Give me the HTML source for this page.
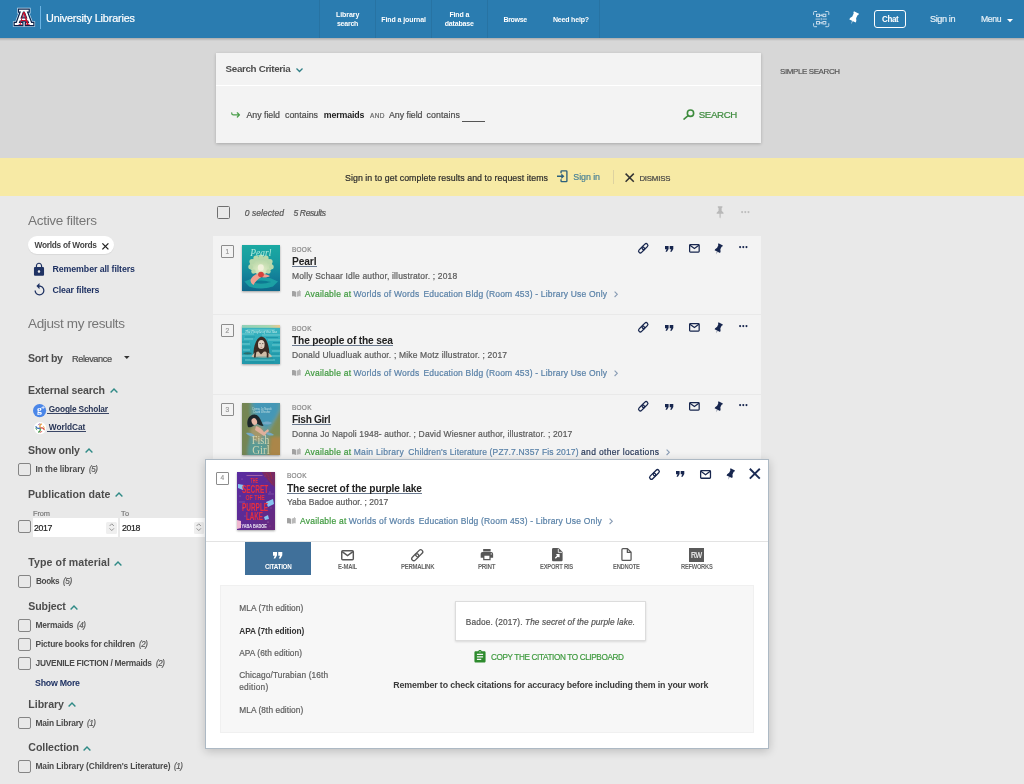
<!DOCTYPE html>
<html lang="en">
<head>
<meta charset="utf-8">
<title>Library search - University Libraries</title>
<style>
html,body{margin:0;padding:0}
body{width:1024px;height:784px;position:relative;overflow:hidden;background:#e9e9e9;font-family:"Liberation Sans",sans-serif}
#page{position:absolute;left:0;top:0;width:1024px;height:784px;will-change:transform}
.t{position:absolute;white-space:nowrap;display:block}
.ub{position:absolute;height:1px;display:block}
.b{position:absolute;box-sizing:border-box;display:block}
.cb{position:absolute;box-sizing:border-box;width:13px;height:12.5px;border:1px solid #858585;border-radius:2px;left:17.5px}
.nb{position:absolute;box-sizing:border-box;width:12.5px;height:12.5px;border:1px solid #8c8c8c;border-radius:1px}
.card{position:absolute;left:213px;width:548px;height:77.5px;background:#f3f3f3}
svg{position:absolute;overflow:visible;display:block}
.th{position:absolute;overflow:hidden;box-shadow:0 1px 2px rgba(0,0,0,.35)}
.pz{z-index:10}
</style>
</head>
<body>
<div id="page">
<!-- ===== header ===== -->
<div class="b" style="left:0;top:0;width:1024px;height:38px;background:#2a7cb0"></div>
<i class="b" style="left:319px;top:0;width:1px;height:38px;background:rgba(0,0,0,.07)"></i>
<i class="b" style="left:375px;top:0;width:1px;height:38px;background:rgba(0,0,0,.07)"></i>
<i class="b" style="left:431px;top:0;width:1px;height:38px;background:rgba(0,0,0,.07)"></i>
<i class="b" style="left:487px;top:0;width:1px;height:38px;background:rgba(0,0,0,.07)"></i>
<i class="b" style="left:599px;top:0;width:1px;height:38px;background:rgba(0,0,0,.07)"></i>
<!-- logo block A -->
<svg style="left:12px;top:7px" width="24" height="22" viewBox="0 0 24 22" fill="none">
  <path d="M8 3.600H15.700M3.700 17H9.300M14.900 17H20.300" stroke="#cfe3f3" stroke-width="5.6" stroke-linecap="square"/>
  <path d="M10.300 3.600L5.300 17M13.400 3.600L18.600 17M7.500 12.500H16.500" stroke="#cfe3f3" stroke-width="5.6" stroke-linecap="butt"/>
  <path d="M8 3.600H15.700M3.700 17H9.300M14.900 17H20.300" stroke="#0c234b" stroke-width="4.3" stroke-linecap="square"/>
  <path d="M10.300 3.600L5.300 17M13.400 3.600L18.600 17M7.500 12.500H16.500" stroke="#0c234b" stroke-width="4.3" stroke-linecap="butt"/>
  <path d="M8 3.600H15.700M3.700 17H9.300M14.900 17H20.300" stroke="#ffffff" stroke-width="1.9" stroke-linecap="square"/>
  <path d="M10.300 3.600L5.300 17M13.400 3.600L18.600 17M7.500 12.500H16.500" stroke="#ffffff" stroke-width="1.9" stroke-linecap="butt"/>
  <text x="12.100" y="17.600" text-anchor="middle" font-family="Liberation Serif, serif" font-size="19.500" fill="#c8102e" stroke="none" textLength="11.800" lengthAdjust="spacingAndGlyphs">A</text>
</svg>
<i class="b" style="left:40px;top:6px;width:1.200px;height:23px;background:#6bb3e2"></i>
<!-- QR icon -->
<svg style="left:813px;top:10.600px" width="16.400" height="16.200" viewBox="0 0 33 33" fill="none" stroke="#d3e3f0" stroke-width="1.900">
  <path d="M1 8V3a2 2 0 0 1 2-2h5M25 1h5a2 2 0 0 1 2 2v5M32 25v5a2 2 0 0 1-2 2h-5M8 32H3a2 2 0 0 1-2-2v-5"/>
  <rect x="7" y="6.500" width="6" height="5"/><rect x="20" y="6.500" width="6" height="5"/><rect x="7" y="21.500" width="6" height="5"/><rect x="20" y="21.500" width="6" height="5"/>
  <path d="M5 16.500h9M19 16.500h9M16.500 6v5M16.500 14v5M16.500 22v5M13 9h7M13 24h7" stroke-width="1.600"/>
</svg>
<!-- header pin -->
<svg style="left:851.400px;top:12.300px" width="7" height="13.100" viewBox="0 0 6 11.200"><g transform="rotate(25 3 4)"><path d="M.6 0H5.400V1.100L4.800 1.700V4.600L6 6.700V8H0V6.700L1.200 4.600V1.700L.6 1.100Z" fill="#ffffff"/><path d="M2.500 8H3.500L3 11.200Z" fill="#ffffff" fill-opacity=".7"/></g></svg>
<!-- chat button -->
<div class="b" style="left:874.4px;top:10.2px;width:31.4px;height:17.7px;border:1px solid #fff;border-radius:3px"></div>
<!-- menu caret -->
<svg style="left:1007px;top:19px" width="6" height="3.2" viewBox="0 0 6 3.2"><path d="M0 0h6L3 3.200z" fill="#fff"/></svg>

<!-- ===== top gray zone + search box ===== -->
<div class="b" style="left:0;top:38px;width:1024px;height:120px;background:#d7d7d7"></div>
<i class="b" style="left:0;top:38px;width:1024px;height:2.500px;background:linear-gradient(rgba(0,0,0,.2),rgba(0,0,0,0))"></i>
<div class="b" style="left:216px;top:53px;width:545px;height:90px;background:#f3f3f3;box-shadow:0 1px 3px rgba(0,0,0,.22)"></div>
<i class="b" style="left:216px;top:84.600px;width:545px;height:1.5px;background:#fff"></i>
<svg style="left:295.500px;top:67.500px" width="7" height="4.500" viewBox="0 0 7 4.500" fill="none" stroke="#2f7f86" stroke-width="1.300"><path d="M.5.500l3 3 3-3"/></svg>
<!-- hook arrow -->
<svg style="left:231px;top:112.200px" width="9.600" height="5.800" viewBox="0 0 19.200 11.600" fill="none" stroke="#4a9d4a" stroke-width="2.500" stroke-linecap="round" stroke-linejoin="round"><path d="M1.500 1.500v1a3.300 3.300 0 0 0 3.300 3.300h12M12.700 1.600l4.300 4.200-4.300 4.200"/></svg>
<i class="b" style="left:462px;top:120.500px;width:23px;height:1px;background:#555"></i>
<!-- search icon -->
<svg style="left:683px;top:109px" width="11.700" height="11" viewBox="0 0 23.400 22" fill="none" stroke="#3d8b3d" stroke-width="3.200" stroke-linecap="round"><circle cx="15" cy="8.400" r="6.300"/><path d="M10.300 13.100L2 20.200"/></svg>

<!-- ===== yellow banner ===== -->
<div class="b" style="left:0;top:158px;width:1024px;height:38px;background:#f7eaa5"></div>
<svg style="left:557.300px;top:169.800px" width="10.800" height="12.600" viewBox="0 0 24 28"><path d="M9 7.500V3.500a1.500 1.500 0 0 1 1.500-1.500h10a1.500 1.500 0 0 1 1.500 1.500v21a1.500 1.500 0 0 1-1.500 1.500h-10a1.500 1.500 0 0 1-1.500-1.500V20.500" fill="none" stroke="#2c607c" stroke-width="3"/><path d="M0 12.200h9.500V8l7 6-7 6v-4.200H0z" fill="#2c607c"/></svg>
<i class="b" style="left:613px;top:170px;width:1px;height:14px;background:#ddd2a0"></i>
<svg style="left:624.700px;top:172.500px" width="9.400" height="9.400" viewBox="0 0 9.400 9.400" stroke="#333" stroke-width="1.500"><path d="M.6.600l8.200 8.200M8.800.600L.6 8.800"/></svg>

<!-- ===== main column tint ===== -->
<!-- ===== sidebar ===== -->
<div class="b" style="left:28px;top:236.100px;width:86px;height:17.800px;background:#fff;border-radius:9px;box-shadow:0 1px 1px rgba(0,0,0,.07)"></div>
<svg style="left:102.300px;top:242.600px" width="6.800" height="6.800" viewBox="0 0 6.800 6.800" stroke="#222" stroke-width="1.300"><path d="M.4.400l6 6M6.400.400l-6 6"/></svg>
<!-- lock -->
<svg style="left:33px;top:261.500px" width="12" height="14.500" viewBox="3 0 18 23" fill="#1f3263"><path d="M18 8h-1V6c0-2.760-2.240-5-5-5S7 3.240 7 6v2H6c-1.100 0-2 .9-2 2v10c0 1.100.9 2 2 2h12c1.100 0 2-.9 2-2V10c0-1.100-.9-2-2-2zm-6 9c-1.100 0-2-.9-2-2s.9-2 2-2 2 .9 2 2-.9 2-2 2zm3.100-9H8.900V6c0-1.710 1.390-3.100 3.100-3.100 1.710 0 3.100 1.390 3.100 3.100v2z"/></svg>
<!-- replay -->
<svg style="left:33.500px;top:283.300px" width="11" height="12.400" viewBox="4 1 16 20" fill="#1f3263"><path d="M12 5V1L7 6l5 5V7c3.310 0 6 2.690 6 6s-2.690 6-6 6-6-2.690-6-6H4c0 4.420 3.580 8 8 8s8-3.580 8-8-3.580-8-8-8z"/></svg>
<!-- sort caret -->
<svg style="left:124px;top:355.800px" width="5.600" height="3" viewBox="0 0 5.600 3"><path d="M0 0h5.600L2.800 3z" fill="#333"/></svg>
<!-- heading chevrons (up) -->
<svg style="left:109.500px;top:387.500px" width="8" height="5" viewBox="0 0 8 5" fill="none" stroke="#2f8a86" stroke-width="1.400"><path d="M.6 4.400l3.400-3.400 3.400 3.400"/></svg>
<svg style="left:84.500px;top:448px" width="8" height="5" viewBox="0 0 8 5" fill="none" stroke="#2f8a86" stroke-width="1.400"><path d="M.6 4.400l3.400-3.400 3.400 3.400"/></svg>
<svg style="left:114.500px;top:491.700px" width="8" height="5" viewBox="0 0 8 5" fill="none" stroke="#2f8a86" stroke-width="1.400"><path d="M.6 4.400l3.400-3.400 3.400 3.400"/></svg>
<svg style="left:114.300px;top:561px" width="8" height="5" viewBox="0 0 8 5" fill="none" stroke="#2f8a86" stroke-width="1.400"><path d="M.6 4.400l3.400-3.400 3.400 3.400"/></svg>
<svg style="left:69.800px;top:605px" width="8" height="5" viewBox="0 0 8 5" fill="none" stroke="#2f8a86" stroke-width="1.400"><path d="M.6 4.400l3.400-3.400 3.400 3.400"/></svg>
<svg style="left:67.500px;top:702.300px" width="8" height="5" viewBox="0 0 8 5" fill="none" stroke="#2f8a86" stroke-width="1.400"><path d="M.6 4.400l3.400-3.400 3.400 3.400"/></svg>
<svg style="left:82.500px;top:745.800px" width="8" height="5" viewBox="0 0 8 5" fill="none" stroke="#2f8a86" stroke-width="1.400"><path d="M.6 4.400l3.400-3.400 3.400 3.400"/></svg>
<!-- google scholar icon -->
<svg style="left:33px;top:403.500px" width="13.200" height="13.200" viewBox="0 0 26 26"><circle cx="13" cy="13" r="13" fill="#4a86e8"/><text x="12.500" y="18.500" text-anchor="middle" font-family="Liberation Serif, serif" font-weight="700" font-size="19" fill="#ffffff">g</text><path d="M17 7h6M20 4v6" stroke="#dbe6fb" stroke-width="1.800"/></svg>
<!-- worldcat icon -->
<svg style="left:33.500px;top:421.800px" width="12.200" height="12.200" viewBox="0 0 24 24" fill="none" stroke-width="2.400" stroke-linecap="round"><circle cx="12" cy="12" r="12" fill="#ffffff"/>
 <path d="M12 11c-1-3 0-6 3-7" stroke="#e8a33a"/><path d="M13 12c3-1 6 0 7 3" stroke="#d8443a"/><path d="M12 13c1 3 0 6-3 7" stroke="#3a9a4a"/><path d="M11 12c-3 1-6 0-7-3" stroke="#3a6ab8"/>
 <path d="M8.500 5.500c1-1.200 2.200-1.700 3.500-1.700" stroke="#8a4a9a" stroke-width="1.800"/><path d="M18.500 8.500c1.200 1 1.700 2.200 1.700 3.500" stroke="#e8a33a" stroke-width="1.800"/><path d="M15.500 18.500c-1 1.200-2.200 1.700-3.500 1.700" stroke="#d8443a" stroke-width="1.800"/><path d="M5.500 15.500c-1.200-1-1.700-2.200-1.700-3.500" stroke="#3a9a4a" stroke-width="1.800"/></svg>
<!-- facet checkboxes -->
<i class="cb" style="top:463px"></i>
<i class="cb" style="top:520.100px"></i>
<i class="cb" style="top:575.200px"></i>
<i class="cb" style="top:619px"></i>
<i class="cb" style="top:638px"></i>
<i class="cb" style="top:657.200px"></i>
<i class="cb" style="top:716.800px"></i>
<i class="cb" style="top:760.300px"></i>
<!-- date inputs -->
<div class="b" style="left:32.500px;top:518px;width:85px;height:18.800px;background:#fff"></div>
<div class="b" style="left:120px;top:518px;width:85.500px;height:18.800px;background:#fff"></div>
<div class="b" style="left:106px;top:521.500px;width:10.500px;height:12px;background:#efefef;border-radius:1.500px"></div>
<div class="b" style="left:193.500px;top:521.500px;width:10.500px;height:12px;background:#efefef;border-radius:1.500px"></div>
<svg style="left:108.500px;top:523.300px" width="5.500" height="8.400" viewBox="0 0 5.500 8.400" fill="none" stroke="#8a8a8a" stroke-width=".9"><path d="M.6 3l2.150-2.200L4.900 3M.6 5.400l2.150 2.200L4.900 5.400"/></svg>
<svg style="left:196px;top:523.300px" width="5.500" height="8.400" viewBox="0 0 5.500 8.400" fill="none" stroke="#8a8a8a" stroke-width=".9"><path d="M.6 3l2.150-2.200L4.900 3M.6 5.400l2.150 2.200L4.900 5.400"/></svg>

<i class="b" style="left:217px;top:206px;width:13.2px;height:13px;border:1px solid #6f6f6f;border-radius:1.500px"></i>
<svg style="left:715.70px;top:206.00px" width="8.20" height="12.60" viewBox="5 1.5 14 22" ><path d="M8 2h8v2.200l-1.300 1v4.800l3.300 3.200V15.200h-5v5.800l-1 2.500-1-2.500v-5.800H6v-2L9.300 10V5.200L8 4.200z" fill="#b9b9b9"/></svg>
<svg style="left:740.50px;top:211.30px" width="8.60" height="2.20" viewBox="0 0 8.6 2.2" ><g fill="#bdbdbd"><circle cx="1.1" cy="1.1" r="1.05"/><circle cx="4.3" cy="1.1" r="1.05"/><circle cx="7.5" cy="1.1" r="1.05"/></g></svg>
<div class="card" style="top:236px;height:78.3px"></div>
<i class="nb" style="left:221px;top:245.4px"></i>
<svg style="left:637.60px;top:243.30px" width="10.50" height="10.50" viewBox="0 0 10.5 10.5" ><g fill="none" stroke="#17264e" stroke-width="1.25"><rect x="0.12" y="5.17" width="6.9" height="3.5" rx="1.75" transform="rotate(-45 3.57 6.92)"/><rect x="3.47" y="1.82" width="6.9" height="3.5" rx="1.75" transform="rotate(-45 6.92 3.57)"/></g></svg>
<svg style="left:664.50px;top:246.20px" width="8.30" height="5.70" viewBox="0 0 8.3 5.7" ><path d="M0 0H3.6V3L2 5.7H.5L1.6 3.3H0Z" fill="#17264e"/><path d="M0 0H3.6V3L2 5.7H.5L1.6 3.3H0Z" fill="#17264e" transform="translate(4.7 0)"/></svg>
<svg style="left:688.80px;top:244.25px" width="10.80" height="8.65" viewBox="0 0 10.8 8.65" ><g fill="none" stroke="#17264e" stroke-width="1.25"><rect x=".62" y=".62" width="9.56" height="7.4" rx=".8"/><path d="M.9 1.3l4.500 3.300 4.500-3.300"/></g></svg>
<svg style="left:716.40px;top:243.60px" width="6.00" height="11.20" viewBox="0 0 6 11.2" ><g transform="rotate(25 3 4)"><path d="M.6 0H5.400V1.100L4.800 1.700V4.600L6 6.700V8H0V6.700L1.200 4.600V1.700L.6 1.100Z" fill="#17264e"/><path d="M2.500 8H3.500L3 11.200Z" fill="#17264e" fill-opacity=".55"/></g></svg>
<svg style="left:739.40px;top:246.30px" width="8.60" height="2.20" viewBox="0 0 8.6 2.2" ><g fill="#17264e"><circle cx="1.1" cy="1.1" r="1.05"/><circle cx="4.3" cy="1.1" r="1.05"/><circle cx="7.5" cy="1.1" r="1.05"/></g></svg>
<svg style="left:292.00px;top:290.00px" width="8.70" height="7.00" viewBox="0 0 8.7 7" ><g fill="#a2a2a2"><path d="M0 1.200C1.300.8 2.700.9 4 1.700V7C2.700 6.300 1.300 6.200 0 6.500Z"/><path d="M4.700 1.700C5.400 1.200 6.200 1 7 1V0h.8v1h.9v5.500C7.400 6.200 6 6.300 4.700 7Z" fill-opacity=".75"/></g></svg>
<div class="card" style="top:315.4px;height:78.2px"></div>
<i class="nb" style="left:221px;top:324.4px"></i>
<svg style="left:637.60px;top:322.30px" width="10.50" height="10.50" viewBox="0 0 10.5 10.5" ><g fill="none" stroke="#17264e" stroke-width="1.25"><rect x="0.12" y="5.17" width="6.9" height="3.5" rx="1.75" transform="rotate(-45 3.57 6.92)"/><rect x="3.47" y="1.82" width="6.9" height="3.5" rx="1.75" transform="rotate(-45 6.92 3.57)"/></g></svg>
<svg style="left:664.50px;top:325.20px" width="8.30" height="5.70" viewBox="0 0 8.3 5.7" ><path d="M0 0H3.6V3L2 5.7H.5L1.6 3.3H0Z" fill="#17264e"/><path d="M0 0H3.6V3L2 5.7H.5L1.6 3.3H0Z" fill="#17264e" transform="translate(4.7 0)"/></svg>
<svg style="left:688.80px;top:323.25px" width="10.80" height="8.65" viewBox="0 0 10.8 8.65" ><g fill="none" stroke="#17264e" stroke-width="1.25"><rect x=".62" y=".62" width="9.56" height="7.4" rx=".8"/><path d="M.9 1.3l4.500 3.300 4.500-3.300"/></g></svg>
<svg style="left:716.40px;top:322.60px" width="6.00" height="11.20" viewBox="0 0 6 11.2" ><g transform="rotate(25 3 4)"><path d="M.6 0H5.400V1.100L4.800 1.700V4.600L6 6.700V8H0V6.700L1.200 4.600V1.700L.6 1.100Z" fill="#17264e"/><path d="M2.500 8H3.500L3 11.200Z" fill="#17264e" fill-opacity=".55"/></g></svg>
<svg style="left:739.40px;top:325.30px" width="8.60" height="2.20" viewBox="0 0 8.6 2.2" ><g fill="#17264e"><circle cx="1.1" cy="1.1" r="1.05"/><circle cx="4.3" cy="1.1" r="1.05"/><circle cx="7.5" cy="1.1" r="1.05"/></g></svg>
<svg style="left:292.00px;top:369.00px" width="8.70" height="7.00" viewBox="0 0 8.7 7" ><g fill="#a2a2a2"><path d="M0 1.200C1.300.8 2.700.9 4 1.700V7C2.700 6.300 1.300 6.200 0 6.500Z"/><path d="M4.700 1.700C5.400 1.200 6.200 1 7 1V0h.8v1h.9v5.500C7.400 6.200 6 6.300 4.700 7Z" fill-opacity=".75"/></g></svg>
<div class="card" style="top:394.7px;height:70px"></div>
<i class="nb" style="left:221px;top:403.4px"></i>
<svg style="left:637.60px;top:401.30px" width="10.50" height="10.50" viewBox="0 0 10.5 10.5" ><g fill="none" stroke="#17264e" stroke-width="1.25"><rect x="0.12" y="5.17" width="6.9" height="3.5" rx="1.75" transform="rotate(-45 3.57 6.92)"/><rect x="3.47" y="1.82" width="6.9" height="3.5" rx="1.75" transform="rotate(-45 6.92 3.57)"/></g></svg>
<svg style="left:664.50px;top:404.20px" width="8.30" height="5.70" viewBox="0 0 8.3 5.7" ><path d="M0 0H3.6V3L2 5.7H.5L1.6 3.3H0Z" fill="#17264e"/><path d="M0 0H3.6V3L2 5.7H.5L1.6 3.3H0Z" fill="#17264e" transform="translate(4.7 0)"/></svg>
<svg style="left:688.80px;top:402.25px" width="10.80" height="8.65" viewBox="0 0 10.8 8.65" ><g fill="none" stroke="#17264e" stroke-width="1.25"><rect x=".62" y=".62" width="9.56" height="7.4" rx=".8"/><path d="M.9 1.3l4.500 3.300 4.500-3.300"/></g></svg>
<svg style="left:716.40px;top:401.60px" width="6.00" height="11.20" viewBox="0 0 6 11.2" ><g transform="rotate(25 3 4)"><path d="M.6 0H5.400V1.100L4.800 1.700V4.600L6 6.700V8H0V6.700L1.200 4.600V1.700L.6 1.100Z" fill="#17264e"/><path d="M2.500 8H3.500L3 11.200Z" fill="#17264e" fill-opacity=".55"/></g></svg>
<svg style="left:739.40px;top:404.30px" width="8.60" height="2.20" viewBox="0 0 8.6 2.2" ><g fill="#17264e"><circle cx="1.1" cy="1.1" r="1.05"/><circle cx="4.3" cy="1.1" r="1.05"/><circle cx="7.5" cy="1.1" r="1.05"/></g></svg>
<svg style="left:292.00px;top:448.00px" width="8.70" height="7.00" viewBox="0 0 8.7 7" ><g fill="#a2a2a2"><path d="M0 1.200C1.300.8 2.700.9 4 1.700V7C2.700 6.300 1.300 6.200 0 6.500Z"/><path d="M4.700 1.700C5.400 1.200 6.200 1 7 1V0h.8v1h.9v5.500C7.400 6.200 6 6.300 4.700 7Z" fill-opacity=".75"/></g></svg>
<svg style="left:614.20px;top:291.30px" width="3.90" height="6.60" viewBox="0 0 3.9 6.6" ><path d="M.6.600l2.700 2.700-2.700 2.700" fill="none" stroke="#8a9db5" stroke-width="1.15"/></svg>
<svg style="left:614.20px;top:370.30px" width="3.90" height="6.60" viewBox="0 0 3.9 6.6" ><path d="M.6.600l2.700 2.700-2.700 2.700" fill="none" stroke="#8a9db5" stroke-width="1.15"/></svg>
<svg style="left:665.50px;top:449.30px" width="3.90" height="6.60" viewBox="0 0 3.9 6.6" ><path d="M.6.600l2.700 2.700-2.700 2.700" fill="none" stroke="#8a9db5" stroke-width="1.15"/></svg>
<div class="th" style="left:242px;top:245px;width:38px;height:45.500px;background:linear-gradient(#1ba9a2 0%,#179ba0 35%,#138099 68%,#0f6689 100%)">
<svg style="left:0;top:0" width="38" height="45.500" viewBox="0 0 38 45.500">
<defs><filter id="b1" x="-20%" y="-20%" width="140%" height="140%"><feGaussianBlur stdDeviation=".55"/></filter>
<radialGradient id="sh1" cx=".5" cy=".75" r=".8"><stop offset="0" stop-color="#e4eecb"/><stop offset=".5" stop-color="#c4ddb0"/><stop offset="1" stop-color="#a9cfa4"/></radialGradient></defs>
<g filter="url(#b1)">
<path d="M2.500 36.500L11 33H28L36 36.500L31 41.500Q19 45.500 7 41.500Z" fill="#1b9fa4"/><path d="M9 37Q19 34 29 37Q19 40.500 9 37Z" fill="#117a92"/>
<ellipse cx="19" cy="20.500" rx="11.300" ry="8.800" fill="url(#sh1)"/>
<g fill="#b9d8aa"><circle cx="8.600" cy="22" r="2.400"/><circle cx="29.400" cy="22" r="2.400"/><circle cx="10" cy="16.500" r="2.600"/><circle cx="28" cy="16.500" r="2.600"/><circle cx="14" cy="13" r="2.600"/><circle cx="24" cy="13" r="2.600"/><circle cx="19" cy="12" r="2.600"/><circle cx="11.500" cy="26.500" r="2.200"/><circle cx="26.500" cy="26.500" r="2.200"/></g>
<ellipse cx="18.800" cy="22.500" rx="3" ry="3.300" fill="#f1f1dc"/>
<path d="M15 29c-3 1-5.500 3-6.500 6 0 2 1 4 3 5 1.500-3 4-6 8-8 3 1 6 .5 8.500-1-3-1.500-8-2.500-13-2z" fill="#f0a090"/>
<ellipse cx="19" cy="29.500" rx="2.900" ry="2.700" fill="#d6423c"/>
</g>
<text x="18.800" y="11" text-anchor="middle" font-family="Liberation Serif, serif" font-style="italic" font-size="10.500" fill="#bdf0e0" fill-opacity=".92" textLength="21" lengthAdjust="spacingAndGlyphs">Pearl</text>
</svg></div>
<div class="th" style="left:242px;top:324.700px;width:38px;height:39.300px;background:#2faebb">
<svg style="left:0;top:0" width="38" height="39.300" viewBox="0 0 38 39.300">
<defs><linearGradient id="g2" x1="0" x2="1"><stop offset="0" stop-color="#8fd0b8"/><stop offset=".7" stop-color="#a8d6b0"/><stop offset="1" stop-color="#ecc88c"/></linearGradient>
<filter id="b2" x="-20%" y="-20%" width="140%" height="140%"><feGaussianBlur stdDeviation=".5"/></filter></defs>
<linearGradient id="w2" x1="0" y1="0" x2="0" y2="1"><stop offset="0" stop-color="#3cb6c2"/><stop offset=".55" stop-color="#2ba7b6"/><stop offset="1" stop-color="#2197aa"/></linearGradient><rect width="38" height="39.300" fill="url(#w2)"/><rect width="38" height="2.800" fill="url(#g2)"/>
<g filter="url(#b2)">
<g stroke="#7fd6d8" stroke-width="1" opacity=".8"><path d="M0 9h12M20 10h18M2 14h9M26 15h12M0 19h8M30 20h8M1 25h7M30 26h8M0 31h14M24 31h14M3 35h30M5 5h28"/></g>
<g stroke="#1b8fa2" stroke-width="1.100" opacity=".75"><path d="M3 12h10M24 12.500h12M0 22h9M29 23h9M0 28h10M27 29h10M8 37h24M0 17h7M31 17.500h7"/></g>
<path d="M1 28.500c3-1.500 6-1.500 9 0-3 1.500-6 1.500-9 0z" fill="#2c5a52" opacity=".7"/>
<path d="M11.500 32.500c-.5-8 1.500-19 7.500-21 6 0 8.500 10 8.500 21z" fill="#3a2a22"/>
<ellipse cx="19.300" cy="19.500" rx="3.300" ry="4.600" fill="#e2d2c2"/><path d="M17.400 18.600h1.400M20 18.600h1.400" stroke="#4a3a32" stroke-width=".7"/><path d="M18.500 22.300h1.700" stroke="#a86a5a" stroke-width=".7"/><path d="M19.300 19.500v1.600" stroke="#b8a090" stroke-width=".5"/>
<path d="M9.500 31.500c2-4 5-5 7-5l2.500 3 3-3c3 0 6.500 2 8 5-2 2-18.500 2-20.500 0z" fill="#cfbca6"/><path d="M8 32.500c4-1.200 19-1.200 23 0v2H8z" fill="#2a8f98" opacity=".55"/>
<path d="M14.500 24c-1 3-2 6-1.500 8.500M24.500 24c1 3 1.500 6 1 8.500" stroke="#3a2a22" stroke-width="1.700" fill="none"/>
</g>
<text x="19" y="8" text-anchor="middle" font-family="Liberation Serif, serif" font-style="italic" font-size="3.700" fill="#dff5f1" fill-opacity=".9">The People of the Sea</text>
</svg></div>
<div class="th" style="left:242px;top:403px;width:38px;height:52px;background:#6f9a86">
<svg style="left:0;top:0" width="38" height="52" viewBox="0 0 38 52">
<defs><linearGradient id="g3" x1="0" y1="0" x2="1" y2="1"><stop offset="0" stop-color="#6f9678"/><stop offset=".45" stop-color="#4f9bac"/><stop offset="1" stop-color="#a8945c"/></linearGradient>
<filter id="b3" x="-20%" y="-20%" width="140%" height="140%"><feGaussianBlur stdDeviation="1.500"/></filter>
<filter id="b3s" x="-20%" y="-20%" width="140%" height="140%"><feGaussianBlur stdDeviation=".5"/></filter>
<clipPath id="c3"><rect width="38" height="52"/></clipPath></defs>
<g clip-path="url(#c3)">
<rect width="38" height="52" fill="url(#g3)"/>
<g filter="url(#b3)">
<path d="M10-2h26v8c-2 8-6 14-12 18-4-4-10-10-14-26z" fill="#4597b6"/>
<path d="M-2-2h10c-1 10 1 18 3 26-3 8-5 16-4 30H-2z" fill="#748552"/>
<path d="M27 30c4-8 8-16 13-24v48H24c2-8 3-14 3-24z" fill="#7f8c56"/>
<path d="M29 34h11v20H27z" fill="#ab8648"/>
<path d="M8 38c4-3 10-3 16 0 2 4 2 10 0 16H6c-1-6 0-12 2-16z" fill="#5a9a94"/>
<path d="M8 28c2-6 8-8 12-4 2 4 1 10-2 14-4 2-8-2-10-10z" fill="#a4976a"/>
</g>
<g filter="url(#b3s)">
<path d="M6 16c2-5 8-6 11-2 2 3 3 6 4.500 9-3 0-5.500-2-7.500-3-2 3-5 5-8 4-1-3-1-5 0-8z" fill="#1d282c"/>
<ellipse cx="12.300" cy="18.500" rx="2.700" ry="3.500" fill="#e8b8a6" transform="rotate(-20 12.300 18.500)"/>
<path d="M14 23c3 1 6 3 8 6l4-3 1 2-5 5c-3-2-6-4-9-6z" fill="#e0b09c"/>
<path d="M20 20c3-2 7-2 10 0-3 2-7 2-10 0zM4 30c3-1 7 0 9 3-3 1-7 0-9-3zM24 30c3-1 6 0 8 2-3 1-6 1-8-2z" fill="#74a9c6"/>
</g>
<text x="18.500" y="41.300" text-anchor="middle" font-family="Liberation Serif, serif" font-size="11.500" fill="#e0dfb8" fill-opacity=".85" textLength="17.500" lengthAdjust="spacingAndGlyphs">Fish</text>
<text x="19" y="51" text-anchor="middle" font-family="Liberation Serif, serif" font-size="11.500" fill="#e0dfb8" fill-opacity=".85" textLength="17.500" lengthAdjust="spacingAndGlyphs">Girl</text>
<text x="20" y="6.500" text-anchor="middle" font-family="Liberation Sans, sans-serif" font-size="2.600" fill="#d8ecec" fill-opacity=".8">Donna Jo Napoli</text>
<text x="20" y="10" text-anchor="middle" font-family="Liberation Sans, sans-serif" font-size="2.600" fill="#d8ecec" fill-opacity=".8">David Wiesner</text>
</g>
</svg></div>
<div class="b pz" style="left:205px;top:459px;width:564px;height:289.500px;background:#fff;border:1px solid #adb9c4;box-shadow:0 2px 9px rgba(0,0,0,.2)"></div>
<i class="nb pz" style="left:216.200px;top:472.200px"></i>
<i class="b pz" style="left:206px;top:541px;width:562px;height:1px;background:#e3e3e3"></i>
<svg class="pz" style="left:648.80px;top:468.80px" width="10.92" height="10.92" viewBox="0 0 10.5 10.5" ><g fill="none" stroke="#17264e" stroke-width="1.25"><rect x="0.12" y="5.17" width="6.9" height="3.5" rx="1.75" transform="rotate(-45 3.57 6.92)"/><rect x="3.47" y="1.82" width="6.9" height="3.5" rx="1.75" transform="rotate(-45 6.92 3.57)"/></g></svg>
<svg class="pz" style="left:675.80px;top:471.30px" width="8.30" height="5.70" viewBox="0 0 8.3 5.7" ><path d="M0 0H3.6V3L2 5.7H.5L1.6 3.3H0Z" fill="#17264e"/><path d="M0 0H3.6V3L2 5.7H.5L1.6 3.3H0Z" fill="#17264e" transform="translate(4.7 0)"/></svg>
<svg class="pz" style="left:700.00px;top:469.90px" width="11.12" height="8.91" viewBox="0 0 10.8 8.65" ><g fill="none" stroke="#17264e" stroke-width="1.25"><rect x=".62" y=".62" width="9.56" height="7.4" rx=".8"/><path d="M.9 1.3l4.500 3.300 4.500-3.300"/></g></svg>
<svg class="pz" style="left:727.80px;top:468.90px" width="6.12" height="11.42" viewBox="0 0 6 11.2" ><g transform="rotate(25 3 4)"><path d="M.6 0H5.400V1.100L4.800 1.700V4.600L6 6.700V8H0V6.700L1.200 4.600V1.700L.6 1.100Z" fill="#17264e"/><path d="M2.500 8H3.500L3 11.200Z" fill="#17264e" fill-opacity=".55"/></g></svg>
<svg class="pz" style="left:749.20px;top:468.00px" width="11.60" height="11.40" viewBox="0 0 11.6 11.4" ><path d="M.8.800l10 9.800M10.800.800L.8 10.600" stroke="#1c2c55" stroke-width="1.900" fill="none"/></svg>
<svg class="pz" style="left:287.00px;top:516.80px" width="8.70" height="7.00" viewBox="0 0 8.7 7" ><g fill="#a2a2a2"><path d="M0 1.200C1.300.8 2.700.9 4 1.700V7C2.700 6.300 1.300 6.200 0 6.500Z"/><path d="M4.700 1.700C5.400 1.200 6.200 1 7 1V0h.8v1h.9v5.500C7.400 6.200 6 6.300 4.700 7Z" fill-opacity=".75"/></g></svg>
<svg class="pz" style="left:609.00px;top:518.00px" width="3.90" height="6.60" viewBox="0 0 3.9 6.6" ><path d="M.6.600l2.700 2.700-2.700 2.700" fill="none" stroke="#8a9db5" stroke-width="1.15"/></svg>
<div class="b pz" style="left:244.500px;top:542px;width:66.500px;height:33.300px;background:#40709a"></div>
<svg class="pz" style="left:272.50px;top:552.20px" width="9.30" height="6.38" viewBox="0 0 8.3 5.7" ><path d="M0 0H3.6V3L2 5.7H.5L1.6 3.3H0Z" fill="#ffffff"/><path d="M0 0H3.6V3L2 5.7H.5L1.6 3.3H0Z" fill="#ffffff" transform="translate(4.7 0)"/></svg>
<svg class="pz" style="left:340.70px;top:549.90px" width="13.07" height="10.47" viewBox="0 0 10.8 8.65" ><g fill="none" stroke="#575757" stroke-width="1.2"><rect x=".62" y=".62" width="9.56" height="7.4" rx=".8"/><path d="M.9 1.3l4.500 3.300 4.500-3.300"/></g></svg>
<svg class="pz" style="left:410.70px;top:549.00px" width="12.49" height="12.49" viewBox="0 0 10.5 10.5" ><g fill="none" stroke="#575757" stroke-width="1.1"><rect x="0.12" y="5.17" width="6.9" height="3.5" rx="1.75" transform="rotate(-45 3.57 6.92)"/><rect x="3.47" y="1.82" width="6.9" height="3.5" rx="1.75" transform="rotate(-45 6.92 3.57)"/></g></svg>
<svg class="pz" style="left:479.70px;top:549.00px" width="13.80" height="11.20" viewBox="2 3 20 18" ><path d="M19 8H5c-1.660 0-3 1.340-3 3v6h4v4h12v-4h4v-6c0-1.660-1.340-3-3-3zm-3 11H8v-5h8v5zm3-7c-.55 0-1-.45-1-1s.45-1 1-1 1 .45 1 1-.45 1-1 1zm-1-9H6v4h12V3z" fill="#575757"/></svg>
<svg class="pz" style="left:551.70px;top:548.20px" width="10.60" height="13.30" viewBox="4 2 16 20" ><path d="M14 2H6c-1.100 0-2 .9-2 2v16c0 1.100.9 2 2 2h12c1.100 0 2-.9 2-2V8z" fill="#575757"/><path d="M13.500 3v5.500H19" fill="none" stroke="#fff" stroke-width="1.300"/><path d="M9 17.500l5-5M10.500 12h4v4" fill="none" stroke="#fff" stroke-width="2"/></svg>
<svg class="pz" style="left:620.70px;top:548.20px" width="11.00" height="13.10" viewBox="4 2 16 20" ><path d="M13.500 3H6.500c-.8 0-1.500.7-1.500 1.500v15c0 .8.7 1.500 1.500 1.500h11c.8 0 1.500-.7 1.500-1.500V8.500zM13.300 3v5.700H19" fill="none" stroke="#575757" stroke-width="1.900" stroke-linejoin="round"/></svg>
<div class="b pz" style="left:689.200px;top:547.500px;width:15px;height:14.300px;background:#5a5a5a"></div>
<div class="b pz" style="left:220px;top:585px;width:534px;height:148px;background:#f7f7f7;border:1px solid #f0f0f0"></div>
<div class="b pz" style="left:455px;top:601.200px;width:191.300px;height:40px;background:#fff;border:1px solid #dcdcdc;box-shadow:0 1px 2px rgba(0,0,0,.12)"></div>
<svg class="pz" style="left:473.70px;top:650.20px" width="12.00" height="12.40" viewBox="3 1 18 20" ><path d="M19 3h-4.180C14.400 1.840 13.300 1 12 1c-1.300 0-2.400.84-2.820 2H5c-1.100 0-2 .9-2 2v14c0 1.100.9 2 2 2h14c1.100 0 2-.9 2-2V5c0-1.100-.9-2-2-2zm-7 0c.55 0 1 .45 1 1s-.45 1-1 1-1-.45-1-1 .45-1 1-1zm2 14H7v-2h7v2zm3-4H7v-2h10v2zm0-4H7V7h10v2z" fill="#2e8b2e"/></svg>
<div class="th pz" style="left:236.800px;top:472px;width:38px;height:58.200px;background:#5b2a98">
<svg style="left:0;top:0" width="38" height="58.200" viewBox="0 0 38 58.200">
<defs><linearGradient id="g4" x1="0" y1="0" x2="1" y2="1"><stop offset="0" stop-color="#5a2ca0"/><stop offset=".6" stop-color="#5e2a92"/><stop offset="1" stop-color="#6a2a7a"/></linearGradient></defs>
<rect width="38" height="58.200" fill="url(#g4)"/>
<path d="M25 0h13v15c-3-2-6-5-8-8-2-2-4-4-5-7z" fill="#7d2a5c" opacity=".85"/><path d="M29 1l3 4M33 0l2 7M31 6l4 5" stroke="#a8303a" stroke-width=".8" opacity=".8"/>
<path d="M1 12l6 1-1 5-5-2zM29 30l7-3 1 5-6 3zM27 45l4-2 1 4-4 1z" fill="#86c4ee"/>
<path d="M0 48l4 1v7l-4 1z" fill="#f0b8d0"/>
<g font-family="Liberation Sans, sans-serif" font-weight="700" fill="#ea2f3c">
<text x="13.400" y="11" font-size="6.300" textLength="7.600" lengthAdjust="spacingAndGlyphs">THE</text>
<text x="4.900" y="20.800" font-size="10.600" textLength="26.300" lengthAdjust="spacingAndGlyphs">SECRET</text>
<text x="8.500" y="28.400" font-size="7.500" textLength="19.200" lengthAdjust="spacingAndGlyphs">OF THE</text>
<text x="4.900" y="38.600" font-size="11" textLength="26.300" lengthAdjust="spacingAndGlyphs">PURPLE</text>
<text x="8.900" y="48.500" font-size="10.600" textLength="17" lengthAdjust="spacingAndGlyphs">LAKE</text>
</g>
<text x="4.500" y="55.600" font-family="Liberation Sans, sans-serif" font-weight="700" font-size="5.600" fill="#f4f0fa" textLength="25.400" lengthAdjust="spacingAndGlyphs">YABA BADOE</text>
<rect x="9.500" y="3.300" width="16" height=".45" fill="#f0a8b8"/><g opacity=".55"><circle cx="5" cy="7" r=".5" fill="#f0c0e0"/><circle cx="30" cy="9" r=".6" fill="#c04060"/><circle cx="33" cy="20" r=".5" fill="#f0c0e0"/><circle cx="3" cy="24" r=".6" fill="#a0d0f0"/><circle cx="34" cy="36" r=".5" fill="#f0c0e0"/><circle cx="6" cy="36" r=".5" fill="#f0c0e0"/><circle cx="31" cy="50" r=".6" fill="#f0c0e0"/><circle cx="8" cy="44" r=".5" fill="#a0d0f0"/><circle cx="33" cy="54" r=".5" fill="#e08090"/><circle cx="28" cy="4" r=".7" fill="#c04050"/><circle cx="35" cy="12" r=".6" fill="#b03a4a"/><path d="M31 22h6M2 30h6" stroke="#e8e0f4" stroke-width=".35"/></g>
</svg></div>

<span class='t' style='left:46.00px;top:13.30px;font-size:10.8px;line-height:10.8px;color:#ffffff;-webkit-text-stroke:.2px;letter-spacing:-0.148px;'>University Libraries</span>
<span class='t' style='left:336.00px;top:11.30px;font-size:7px;line-height:7px;color:#ffffff;font-weight:700;letter-spacing:-0.056px;'>Library</span>
<span class='t' style='left:336.90px;top:20.30px;font-size:7px;line-height:7px;color:#ffffff;font-weight:700;letter-spacing:-0.216px;'>search</span>
<span class='t' style='left:381.25px;top:16.30px;font-size:7px;line-height:7px;color:#ffffff;font-weight:700;letter-spacing:-0.088px;'>Find a journal</span>
<span class='t' style='left:449.40px;top:11.30px;font-size:7px;line-height:7px;color:#ffffff;font-weight:700;letter-spacing:-0.125px;'>Find a</span>
<span class='t' style='left:444.70px;top:20.30px;font-size:7px;line-height:7px;color:#ffffff;font-weight:700;letter-spacing:-0.151px;'>database</span>
<span class='t' style='left:503.40px;top:16.30px;font-size:7px;line-height:7px;color:#ffffff;font-weight:700;letter-spacing:-0.299px;'>Browse</span>
<span class='t' style='left:553.00px;top:16.30px;font-size:7px;line-height:7px;color:#ffffff;font-weight:700;letter-spacing:-0.193px;'>Need help?</span>
<span class='t' style='left:881.70px;top:15.30px;font-size:8.3px;line-height:8.3px;color:#ffffff;font-weight:700;letter-spacing:-0.373px;transform:scaleX(0.9644);transform-origin:0 0;'>Chat</span>
<span class='t' style='left:929.60px;top:14.30px;font-size:9.9px;line-height:9.9px;color:#e6f0f7;-webkit-text-stroke:.2px;letter-spacing:-0.446px;transform:scaleX(0.9263);transform-origin:0 0;'>Sign in</span>
<span class='t' style='left:980.60px;top:14.30px;font-size:9.9px;line-height:9.9px;color:#e6f0f7;-webkit-text-stroke:.2px;letter-spacing:-0.446px;transform:scaleX(0.8773);transform-origin:0 0;'>Menu</span>
<span class='t' style='left:780.00px;top:68.30px;font-size:8.1px;line-height:8.1px;color:#555;-webkit-text-stroke:.2px;letter-spacing:-0.364px;transform:scaleX(0.9788);transform-origin:0 0;'>SIMPLE SEARCH</span>
<span class='t' style='left:225.60px;top:64.30px;font-size:9.8px;line-height:9.8px;color:#4d4d4d;font-weight:700;letter-spacing:-0.336px;'>Search Criteria</span>
<span class='t' style='left:246.50px;top:111.30px;font-size:8.8px;line-height:8.8px;color:#4c4c4c;-webkit-text-stroke:.2px;letter-spacing:-0.031px;'>Any field</span>
<span class='t' style='left:285.00px;top:111.30px;font-size:8.8px;line-height:8.8px;color:#4c4c4c;-webkit-text-stroke:.2px;letter-spacing:0.033px;'>contains</span>
<span class='t' style='left:323.70px;top:111.30px;font-size:8.8px;line-height:8.8px;color:#222;font-weight:700;letter-spacing:-0.109px;'>mermaids</span>
<span class='t' style='left:370.00px;top:113.30px;font-size:6.5px;line-height:6.5px;color:#666;-webkit-text-stroke:.2px;letter-spacing:0.383px;'>AND</span>
<span class='t' style='left:389.00px;top:111.30px;font-size:8.8px;line-height:8.8px;color:#4c4c4c;-webkit-text-stroke:.2px;letter-spacing:-0.031px;'>Any field</span>
<span class='t' style='left:426.50px;top:111.30px;font-size:8.8px;line-height:8.8px;color:#4c4c4c;-webkit-text-stroke:.2px;letter-spacing:0.105px;'>contains</span>
<span class='t' style='left:698.70px;top:110.30px;font-size:9.7px;line-height:9.7px;color:#3d8b3d;-webkit-text-stroke:.2px;letter-spacing:-0.355px;'>SEARCH</span>
<span class='t' style='left:345.00px;top:174.30px;font-size:8.8px;line-height:8.8px;color:#2c2c2c;-webkit-text-stroke:.2px;letter-spacing:0.059px;'>Sign in to get complete results and to request items</span>
<span class='t' style='left:573.30px;top:173.30px;font-size:8.9px;line-height:8.9px;color:#4b8296;-webkit-text-stroke:.2px;letter-spacing:-0.073px;'>Sign in</span>
<span class='t' style='left:639.40px;top:175.30px;font-size:7.8px;line-height:7.8px;color:#444;-webkit-text-stroke:.2px;letter-spacing:-0.177px;'>DISMISS</span>
<span class='t' style='left:28.00px;top:214.30px;font-size:13.5px;line-height:13.5px;color:#767676;letter-spacing:-0.291px;'>Active filters</span>
<span class='t' style='left:34.50px;top:241.30px;font-size:8.3px;line-height:8.3px;color:#444;font-weight:700;letter-spacing:-0.256px;'>Worlds of Words</span>
<span class='t' style='left:52.50px;top:265.30px;font-size:8.8px;line-height:8.8px;color:#1f3263;font-weight:700;letter-spacing:-0.085px;'>Remember all filters</span>
<span class='t' style='left:52.50px;top:286.30px;font-size:8.8px;line-height:8.8px;color:#1f3263;font-weight:700;letter-spacing:-0.117px;'>Clear filters</span>
<span class='t' style='left:28.00px;top:317.30px;font-size:13.5px;line-height:13.5px;color:#767676;letter-spacing:-0.361px;'>Adjust my results</span>
<span class='t' style='left:28.00px;top:353.30px;font-size:10.6px;line-height:10.6px;color:#4d4d4d;font-weight:700;letter-spacing:-0.250px;'>Sort by</span>
<span class='t' style='left:72.00px;top:355.30px;font-size:9.2px;line-height:9.2px;color:#4a4a4a;-webkit-text-stroke:.2px;letter-spacing:-0.414px;transform:scaleX(0.9973);transform-origin:0 0;'>Relevance</span>
<span class='t' style='left:28.00px;top:385.30px;font-size:10.6px;line-height:10.6px;color:#4d4d4d;font-weight:700;letter-spacing:-0.137px;'>External search</span>
<i class='ub' style='left:46.80px;top:413px;width:62.00px;background:#3a4666;'></i>
<span class='t' style='left:48.80px;top:405.30px;font-size:8.3px;line-height:8.3px;color:#283556;font-weight:700;letter-spacing:-0.164px;'>Google Scholar</span>
<i class='ub' style='left:46.80px;top:431px;width:39.20px;background:#3a4666;'></i>
<span class='t' style='left:48.80px;top:423.30px;font-size:8.3px;line-height:8.3px;color:#283556;font-weight:700;letter-spacing:-0.033px;'>WorldCat</span>
<span class='t' style='left:28.00px;top:445.30px;font-size:10.6px;line-height:10.6px;color:#4d4d4d;font-weight:700;letter-spacing:-0.121px;'>Show only</span>
<span class='t' style='left:35.50px;top:465.30px;font-size:8.4px;line-height:8.4px;color:#4a4a4a;font-weight:700;letter-spacing:-0.059px;'>In the library</span>
<span class='t' style='left:89.00px;top:465.30px;font-size:9px;line-height:9px;color:#555;-webkit-text-stroke:.2px;font-style:italic;letter-spacing:-0.405px;transform:scaleX(0.8832);transform-origin:0 0;'>(5)</span>
<span class='t' style='left:28.00px;top:489.30px;font-size:10.6px;line-height:10.6px;color:#4d4d4d;font-weight:700;letter-spacing:0.045px;'>Publication date</span>
<span class='t' style='left:33.00px;top:510.30px;font-size:7.4px;line-height:7.4px;color:#7a7a7a;-webkit-text-stroke:.2px;letter-spacing:-0.083px;'>From</span>
<span class='t' style='left:121.00px;top:510.30px;font-size:7.4px;line-height:7.4px;color:#7a7a7a;-webkit-text-stroke:.2px;letter-spacing:0.188px;'>To</span>
<span class='t' style='left:34.00px;top:523.30px;font-size:9.4px;line-height:9.4px;color:#222;-webkit-text-stroke:.2px;letter-spacing:-0.423px;transform:scaleX(0.9341);transform-origin:0 0;'>2017</span>
<span class='t' style='left:122.00px;top:523.30px;font-size:9.4px;line-height:9.4px;color:#222;-webkit-text-stroke:.2px;letter-spacing:-0.423px;transform:scaleX(0.9341);transform-origin:0 0;'>2018</span>
<span class='t' style='left:28.30px;top:557.30px;font-size:10.6px;line-height:10.6px;color:#4d4d4d;font-weight:700;letter-spacing:0.082px;'>Type of material</span>
<span class='t' style='left:35.50px;top:577.30px;font-size:8.4px;line-height:8.4px;color:#4a4a4a;font-weight:700;letter-spacing:-0.378px;transform:scaleX(0.9752);transform-origin:0 0;'>Books</span>
<span class='t' style='left:63.00px;top:577.30px;font-size:9px;line-height:9px;color:#555;-webkit-text-stroke:.2px;font-style:italic;letter-spacing:-0.405px;transform:scaleX(0.9127);transform-origin:0 0;'>(5)</span>
<span class='t' style='left:28.30px;top:601.30px;font-size:10.6px;line-height:10.6px;color:#4d4d4d;font-weight:700;letter-spacing:-0.128px;'>Subject</span>
<span class='t' style='left:35.50px;top:621.30px;font-size:8.4px;line-height:8.4px;color:#4a4a4a;font-weight:700;letter-spacing:-0.158px;'>Mermaids</span>
<span class='t' style='left:77.00px;top:621.30px;font-size:9px;line-height:9px;color:#555;-webkit-text-stroke:.2px;font-style:italic;letter-spacing:-0.405px;transform:scaleX(0.8832);transform-origin:0 0;'>(4)</span>
<span class='t' style='left:35.50px;top:640.30px;font-size:8.4px;line-height:8.4px;color:#4a4a4a;font-weight:700;letter-spacing:-0.171px;'>Picture books for children</span>
<span class='t' style='left:139.00px;top:640.30px;font-size:9px;line-height:9px;color:#555;-webkit-text-stroke:.2px;font-style:italic;letter-spacing:-0.405px;transform:scaleX(0.8832);transform-origin:0 0;'>(2)</span>
<span class='t' style='left:35.50px;top:659.30px;font-size:8.4px;line-height:8.4px;color:#4a4a4a;font-weight:700;letter-spacing:-0.245px;'>JUVENILE FICTION / Mermaids</span>
<span class='t' style='left:155.50px;top:659.30px;font-size:9px;line-height:9px;color:#555;-webkit-text-stroke:.2px;font-style:italic;letter-spacing:-0.405px;transform:scaleX(0.8832);transform-origin:0 0;'>(2)</span>
<span class='t' style='left:35.00px;top:679.30px;font-size:8.8px;line-height:8.8px;color:#1f3263;font-weight:700;letter-spacing:-0.240px;'>Show More</span>
<span class='t' style='left:28.30px;top:699.30px;font-size:10.6px;line-height:10.6px;color:#4d4d4d;font-weight:700;letter-spacing:-0.037px;'>Library</span>
<span class='t' style='left:35.50px;top:719.30px;font-size:8.4px;line-height:8.4px;color:#4a4a4a;font-weight:700;letter-spacing:-0.163px;'>Main Library</span>
<span class='t' style='left:87.00px;top:719.30px;font-size:9px;line-height:9px;color:#555;-webkit-text-stroke:.2px;font-style:italic;letter-spacing:-0.405px;transform:scaleX(0.8832);transform-origin:0 0;'>(1)</span>
<span class='t' style='left:28.30px;top:742.30px;font-size:10.6px;line-height:10.6px;color:#4d4d4d;font-weight:700;letter-spacing:-0.058px;'>Collection</span>
<span class='t' style='left:35.50px;top:762.30px;font-size:8.4px;line-height:8.4px;color:#4a4a4a;font-weight:700;letter-spacing:-0.122px;'>Main Library (Children&#x27;s Literature)</span>
<span class='t' style='left:174.00px;top:762.30px;font-size:9px;line-height:9px;color:#555;-webkit-text-stroke:.2px;font-style:italic;letter-spacing:-0.405px;transform:scaleX(0.8832);transform-origin:0 0;'>(1)</span>
<span class='t' style='left:244.75px;top:209.30px;font-size:8.5px;line-height:8.5px;color:#555;-webkit-text-stroke:.2px;font-style:italic;letter-spacing:0.056px;'>0 selected</span>
<span class='t' style='left:293.50px;top:209.30px;font-size:8.5px;line-height:8.5px;color:#555;-webkit-text-stroke:.2px;font-style:italic;letter-spacing:-0.367px;'>5 Results</span>
<span class='t' style='left:225.40px;top:249.30px;font-size:6.6px;line-height:6.6px;color:#999999;-webkit-text-stroke:.2px;'>1</span>
<span class='t' style='left:292.00px;top:247.30px;font-size:6.5px;line-height:6.5px;color:#888;-webkit-text-stroke:.2px;letter-spacing:0.234px;'>BOOK</span>
<i class='ub' style='left:292.00px;top:266px;width:24.50px;background:#6b7a90;'></i>
<span class='t' style='left:292.00px;top:257.30px;font-size:10.2px;line-height:10.2px;color:#222;font-weight:700;letter-spacing:-0.105px;'>Pearl</span>
<span class='t' style='left:292.00px;top:272.30px;font-size:8.5px;line-height:8.5px;color:#5a5a5a;-webkit-text-stroke:.2px;letter-spacing:0.158px;'>Molly Schaar Idle author, illustrator. ; 2018</span>
<span class='t' style='left:304.75px;top:290.30px;font-size:8.5px;line-height:8.5px;color:#3f9a3f;-webkit-text-stroke:.2px;letter-spacing:0.223px;'>Available at</span>
<span class='t' style='left:353.50px;top:290.30px;font-size:8.5px;line-height:8.5px;color:#5a82a8;-webkit-text-stroke:.2px;letter-spacing:0.231px;'>Worlds of Words</span>
<span class='t' style='left:423.50px;top:290.30px;font-size:8.5px;line-height:8.5px;color:#5a82a8;-webkit-text-stroke:.2px;letter-spacing:0.191px;'>Education Bldg (Room 453) - Library Use Only</span>
<span class='t' style='left:225.40px;top:328.30px;font-size:6.6px;line-height:6.6px;color:#999999;-webkit-text-stroke:.2px;'>2</span>
<span class='t' style='left:292.00px;top:326.30px;font-size:6.5px;line-height:6.5px;color:#888;-webkit-text-stroke:.2px;letter-spacing:0.234px;'>BOOK</span>
<i class='ub' style='left:292.00px;top:345px;width:101.00px;background:#6b7a90;'></i>
<span class='t' style='left:292.00px;top:336.30px;font-size:10.2px;line-height:10.2px;color:#222;font-weight:700;letter-spacing:-0.159px;'>The people of the sea</span>
<span class='t' style='left:292.00px;top:351.30px;font-size:8.5px;line-height:8.5px;color:#5a5a5a;-webkit-text-stroke:.2px;letter-spacing:0.164px;'>Donald Uluadluak author. ; Mike Motz illustrator. ; 2017</span>
<span class='t' style='left:304.75px;top:369.30px;font-size:8.5px;line-height:8.5px;color:#3f9a3f;-webkit-text-stroke:.2px;letter-spacing:0.223px;'>Available at</span>
<span class='t' style='left:353.50px;top:369.30px;font-size:8.5px;line-height:8.5px;color:#5a82a8;-webkit-text-stroke:.2px;letter-spacing:0.231px;'>Worlds of Words</span>
<span class='t' style='left:423.50px;top:369.30px;font-size:8.5px;line-height:8.5px;color:#5a82a8;-webkit-text-stroke:.2px;letter-spacing:0.191px;'>Education Bldg (Room 453) - Library Use Only</span>
<span class='t' style='left:225.40px;top:407.30px;font-size:6.6px;line-height:6.6px;color:#999999;-webkit-text-stroke:.2px;'>3</span>
<span class='t' style='left:292.00px;top:405.30px;font-size:6.5px;line-height:6.5px;color:#888;-webkit-text-stroke:.2px;letter-spacing:0.234px;'>BOOK</span>
<i class='ub' style='left:292.00px;top:424px;width:38.50px;background:#6b7a90;'></i>
<span class='t' style='left:292.00px;top:415.30px;font-size:10.2px;line-height:10.2px;color:#222;font-weight:700;letter-spacing:-0.354px;'>Fish Girl</span>
<span class='t' style='left:292.00px;top:430.30px;font-size:8.5px;line-height:8.5px;color:#5a5a5a;-webkit-text-stroke:.2px;letter-spacing:0.132px;'>Donna Jo Napoli 1948- author. ; David Wiesner author, illustrator. ; 2017</span>
<span class='t' style='left:304.75px;top:448.30px;font-size:8.5px;line-height:8.5px;color:#3f9a3f;-webkit-text-stroke:.2px;letter-spacing:0.223px;'>Available at</span>
<span class='t' style='left:353.75px;top:448.30px;font-size:8.5px;line-height:8.5px;color:#5a82a8;-webkit-text-stroke:.2px;letter-spacing:0.293px;'>Main Library</span>
<span class='t' style='left:408.25px;top:448.30px;font-size:8.5px;line-height:8.5px;color:#5a82a8;-webkit-text-stroke:.2px;letter-spacing:0.145px;'>Children&#x27;s Literature (PZ7.7.N357 Fis 2017)</span>
<span class='t' style='left:581.00px;top:448.30px;font-size:8.5px;line-height:8.5px;color:#2a3a5a;-webkit-text-stroke:.2px;letter-spacing:0.343px;'>and other locations</span>
<span class='t' style='left:220.50px;top:475.30px;font-size:6.6px;line-height:6.6px;color:#999999;-webkit-text-stroke:.2px;z-index:10;'>4</span>
<span class='t' style='left:287.00px;top:473.30px;font-size:6.5px;line-height:6.5px;color:#888;-webkit-text-stroke:.2px;z-index:10;letter-spacing:0.234px;'>BOOK</span>
<i class='ub' style='left:287.00px;top:493px;width:135.00px;background:#6b7a90;z-index:10;'></i>
<span class='t' style='left:287.00px;top:484.30px;font-size:10.2px;line-height:10.2px;color:#222;font-weight:700;z-index:10;letter-spacing:-0.112px;'>The secret of the purple lake</span>
<span class='t' style='left:287.00px;top:498.30px;font-size:8.5px;line-height:8.5px;color:#5a5a5a;-webkit-text-stroke:.2px;z-index:10;letter-spacing:0.031px;'>Yaba Badoe author. ; 2017</span>
<span class='t' style='left:300.00px;top:517.30px;font-size:8.5px;line-height:8.5px;color:#3f9a3f;-webkit-text-stroke:.2px;z-index:10;letter-spacing:0.223px;'>Available at</span>
<span class='t' style='left:348.75px;top:517.30px;font-size:8.5px;line-height:8.5px;color:#5a82a8;-webkit-text-stroke:.2px;z-index:10;letter-spacing:0.231px;'>Worlds of Words</span>
<span class='t' style='left:418.75px;top:517.30px;font-size:8.5px;line-height:8.5px;color:#5a82a8;-webkit-text-stroke:.2px;z-index:10;letter-spacing:0.180px;'>Education Bldg (Room 453) - Library Use Only</span>
<span class='t' style='left:264.50px;top:564.30px;font-size:6.5px;line-height:6.5px;color:#ffffff;font-weight:700;z-index:10;letter-spacing:-0.292px;transform:scaleX(0.9662);transform-origin:0 0;'>CITATION</span>
<span class='t' style='left:337.50px;top:564.30px;font-size:6.5px;line-height:6.5px;color:#666666;font-weight:700;z-index:10;letter-spacing:-0.292px;transform:scaleX(0.9198);transform-origin:0 0;'>E-MAIL</span>
<span class='t' style='left:400.75px;top:564.30px;font-size:6.5px;line-height:6.5px;color:#666666;font-weight:700;z-index:10;letter-spacing:-0.292px;transform:scaleX(0.9228);transform-origin:0 0;'>PERMALINK</span>
<span class='t' style='left:478.00px;top:564.30px;font-size:6.5px;line-height:6.5px;color:#666666;font-weight:700;z-index:10;letter-spacing:-0.292px;transform:scaleX(0.9547);transform-origin:0 0;'>PRINT</span>
<span class='t' style='left:540.25px;top:564.30px;font-size:6.5px;line-height:6.5px;color:#666666;font-weight:700;z-index:10;letter-spacing:-0.292px;transform:scaleX(0.9049);transform-origin:0 0;'>EXPORT RIS</span>
<span class='t' style='left:613.00px;top:564.30px;font-size:6.5px;line-height:6.5px;color:#666666;font-weight:700;z-index:10;letter-spacing:-0.292px;transform:scaleX(0.8992);transform-origin:0 0;'>ENDNOTE</span>
<span class='t' style='left:680.75px;top:564.30px;font-size:6.5px;line-height:6.5px;color:#666666;font-weight:700;z-index:10;letter-spacing:-0.292px;transform:scaleX(0.8850);transform-origin:0 0;'>REFWORKS</span>
<span class='t' style='left:690.80px;top:551.30px;font-size:8.5px;line-height:8.5px;color:#f2f2f2;-webkit-text-stroke:.2px;z-index:10;letter-spacing:-0.383px;transform:scaleX(0.8215);transform-origin:0 0;'>RW</span>
<span class='t' style='left:239.25px;top:604.30px;font-size:8.3px;line-height:8.3px;color:#5e5e5e;-webkit-text-stroke:.2px;z-index:10;letter-spacing:0.079px;'>MLA (7th edition)</span>
<span class='t' style='left:239.25px;top:627.30px;font-size:8.3px;line-height:8.3px;color:#333;font-weight:700;z-index:10;letter-spacing:-0.086px;'>APA (7th edition)</span>
<span class='t' style='left:239.25px;top:649.30px;font-size:8.3px;line-height:8.3px;color:#5e5e5e;-webkit-text-stroke:.2px;z-index:10;letter-spacing:0.068px;'>APA (6th edition)</span>
<span class='t' style='left:239.25px;top:671.30px;font-size:8.3px;line-height:8.3px;color:#5e5e5e;-webkit-text-stroke:.2px;z-index:10;letter-spacing:0.112px;'>Chicago/Turabian (16th</span>
<span class='t' style='left:239.25px;top:683.30px;font-size:8.3px;line-height:8.3px;color:#5e5e5e;-webkit-text-stroke:.2px;z-index:10;letter-spacing:0.254px;'>edition)</span>
<span class='t' style='left:239.25px;top:706.30px;font-size:8.3px;line-height:8.3px;color:#5e5e5e;-webkit-text-stroke:.2px;z-index:10;letter-spacing:0.079px;'>MLA (8th edition)</span>
<span class='t' style='left:465.75px;top:618.30px;font-size:8.3px;line-height:8.3px;color:#555;-webkit-text-stroke:.2px;z-index:10;letter-spacing:0.143px;'>Badoe. (2017).</span>
<span class='t' style='left:525.00px;top:618.30px;font-size:8.3px;line-height:8.3px;color:#555;-webkit-text-stroke:.2px;font-style:italic;z-index:10;letter-spacing:0.087px;'>The secret of the purple lake.</span>
<span class='t' style='left:491.25px;top:653.30px;font-size:8.9px;line-height:8.9px;color:#3f9a3f;-webkit-text-stroke:.2px;z-index:10;letter-spacing:-0.401px;transform:scaleX(0.9221);transform-origin:0 0;'>COPY THE CITATION TO CLIPBOARD</span>
<span class='t' style='left:393.25px;top:681.30px;font-size:8.8px;line-height:8.8px;color:#3a3a3a;font-weight:700;z-index:10;letter-spacing:-0.146px;'>Remember to check citations for accuracy before including them in your work</span>
</div>
</body>
</html>
